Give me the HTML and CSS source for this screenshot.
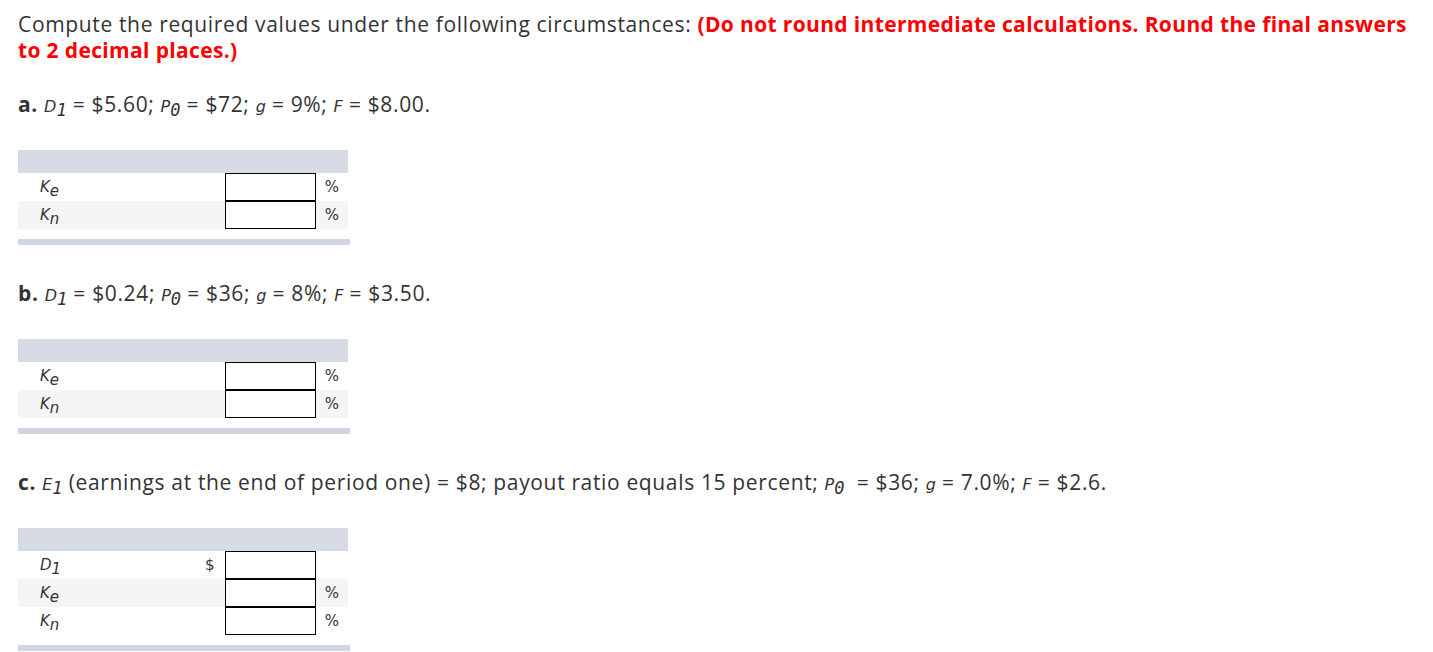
FILE: index.html
```html
<!DOCTYPE html>
<html>
<head>
<meta charset="utf-8">
<link rel="stylesheet" href="styles.css">
</head>
<body>
<div class="page">
  <p class="intro">Compute the required values under the following circumstances: <strong class="warn">(Do not round intermediate calculations. Round the final answers to 2 decimal places.)</strong></p>

  <p class="part"><b>a.</b> <i class="v">D</i><sub class="s">1</sub> = $5.60; <i class="v">P</i><sub class="s">0</sub> = $72; <i class="v">g</i> = 9%; <i class="v">F</i> = $8.00.</p>
  <div class="tbl">
    <div class="thead"></div>
    <div class="row"><span class="lbl">K<sub>e</sub></span><span class="pre"></span><input class="box" type="text"><span class="post">%</span></div>
    <div class="row alt"><span class="lbl">K<sub>n</sub></span><span class="pre"></span><input class="box" type="text"><span class="post">%</span></div>
    <div class="tfoot"></div>
  </div>

  <p class="part"><b>b.</b> <i class="v">D</i><sub class="s">1</sub> = $0.24; <i class="v">P</i><sub class="s">0</sub> = $36; <i class="v">g</i> = 8%; <i class="v">F</i> = $3.50.</p>
  <div class="tbl">
    <div class="thead"></div>
    <div class="row"><span class="lbl">K<sub>e</sub></span><span class="pre"></span><input class="box" type="text"><span class="post">%</span></div>
    <div class="row alt"><span class="lbl">K<sub>n</sub></span><span class="pre"></span><input class="box" type="text"><span class="post">%</span></div>
    <div class="tfoot"></div>
  </div>

  <p class="part"><b>c.</b> <i class="v">E</i><sub class="s">1</sub> (earnings at the end of period one) = $8; payout ratio equals 15 percent; <i class="v">P</i><sub class="s">0</sub> &nbsp;= $36; <i class="v">g</i> = 7.0%; <i class="v">F</i> = $2.6.</p>
  <div class="tbl">
    <div class="thead"></div>
    <div class="row"><span class="lbl">D<sub>1</sub></span><span class="pre">$</span><input class="box" type="text"><span class="post"></span></div>
    <div class="row alt"><span class="lbl">K<sub>e</sub></span><span class="pre"></span><input class="box" type="text"><span class="post">%</span></div>
    <div class="row"><span class="lbl">K<sub>n</sub></span><span class="pre"></span><input class="box" type="text"><span class="post">%</span></div>
    <div class="tfoot"></div>
  </div>
</div>
</body>
</html>
```

FILE: styles.css
```css
html, body {
  margin: 0;
  padding: 0;
  background: #fff;
}
.page {
  padding: 11px 18px 0 18px;
  font-family: "Open Sans", "Lato", sans-serif;
  font-size: 21px;
  letter-spacing: 0.65px;
  color: #333;
}
.intro {
  margin: 0;
  line-height: 26px;
}
.warn {
  color: #f00;
  font-weight: 700;
  letter-spacing: 0.35px;
}
.part {
  margin: 28px 0 0 0;
  line-height: 26px;
}
.part b {
  font-weight: 700;
}
.v {
  font-family: "DejaVu Sans", sans-serif;
  font-style: italic;
  font-size: 16px;
  line-height: 14px;
  letter-spacing: 0;
}
.s {
  font-family: "DejaVu Sans Mono", monospace;
  font-style: italic;
  font-size: 17px;
  vertical-align: -4px;
  line-height: 0;
  letter-spacing: 0;
}
.tbl {
  width: 330px;
  margin: 33px 0 35px 0;
}
.thead {
  height: 23px;
  background: #d6dbe6;
}
.row {
  display: grid;
  grid-template-columns: 163px 22px 91px 1fr;
  align-items: center;
  height: 28px;
  padding-left: 22px;
  font-family: "DejaVu Sans", sans-serif;
  font-size: 14px;
  letter-spacing: 0;
  color: #333;
}
.row.alt {
  background: #f5f5f5;
}
.lbl {
  font-style: italic;
  font-size: 15px;
}
.lbl sub {
  font-size: 15px;
  vertical-align: -4px;
  line-height: 0;
}
.pre {
  padding-left: 2px;
  font-size: 15px;
}
.post {
  text-align: center;
  font-size: 15px;
}
.box {
  box-sizing: border-box;
  width: 91px;
  height: 28px;
  margin: 0;
  border: 1px solid #000;
  background: #fff;
  padding: 0 4px;
  font: inherit;
}
.tfoot {
  height: 6px;
  width: 332px;
  margin-top: 10px;
  background: #cfd5e1;
}
```
